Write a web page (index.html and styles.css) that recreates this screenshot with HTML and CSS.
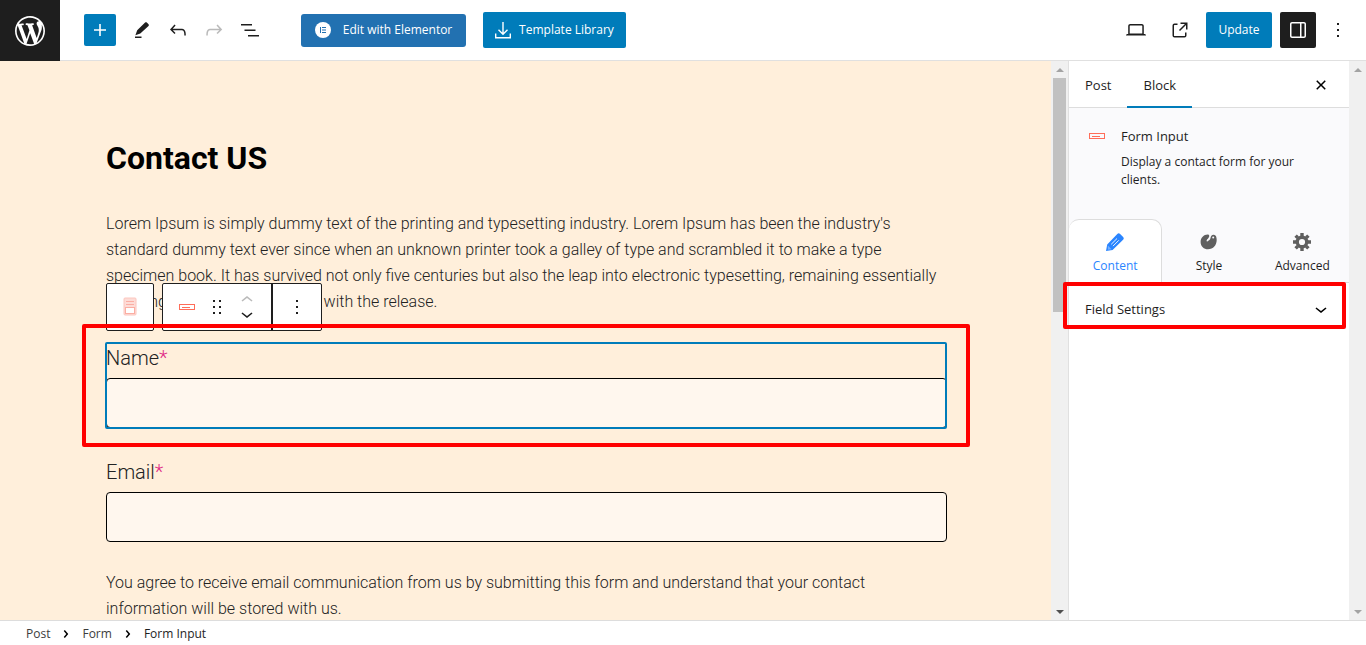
FILE: index.html
```html
<!DOCTYPE html>
<html lang="en">
<head>
    <meta charset="UTF-8">
    <title>Edit Post</title>
    <link rel="stylesheet" href="styles.css">
</head>
<body>
    <!-- Top bar -->
    <header class="topbar">
        <a href="#" class="wp-logo" aria-label="View Posts">
            <svg width="36" height="36" viewBox="-2 -2 24 24"><path d="M20 10c0-5.51-4.49-10-10-10C4.48 0 0 4.49 0 10c0 5.52 4.48 10 10 10 5.51 0 10-4.48 10-10zM7.78 15.37L4.37 6.22c.55-.02 1.17-.08 1.17-.08.5-.06.44-1.13-.06-1.11 0 0-1.45.11-2.37.11-.18 0-.37 0-.58-.01C4.12 2.69 6.87 1.11 10 1.11c2.33 0 4.45.87 6.05 2.34-.68-.11-1.65.39-1.65 1.58 0 .74.45 1.36.9 2.1.35.61.55 1.36.55 2.46 0 1.49-1.4 5-1.4 5l-3.03-8.37c.54-.02.82-.17.82-.17.5-.05.44-1.25-.06-1.22 0 0-1.44.12-2.38.12-.87 0-2.33-.12-2.33-.12-.5-.03-.56 1.2-.06 1.22l.92.08 1.26 3.41zM17.41 10c.24-.64.74-1.87.43-4.25.7 1.29 1.05 2.71 1.05 4.25 0 3.29-1.73 6.24-4.4 7.78.97-2.59 1.94-5.2 2.92-7.78zM6.1 18.09C3.12 16.65 1.11 13.53 1.11 10c0-1.3.23-2.48.72-3.59C3.25 10.3 4.67 14.2 6.1 18.09zm4.03-6.63l2.58 6.98c-.86.29-1.76.45-2.71.45-.79 0-1.57-.11-2.29-.33.81-2.38 1.62-4.74 2.42-7.1z"/></svg>
        </a>
        <div class="tools">
            <button class="inserter" aria-label="Add block">
                <svg width="24" height="24" viewBox="0 0 24 24"><path d="M18 11.2h-5.2V6h-1.6v5.2H6v1.6h5.2V18h1.6v-5.2H18z"/></svg>
            </button>
            <div class="tool-group">
                <button class="icon-btn" aria-label="Tools">
                    <svg width="24" height="24" viewBox="0 0 24 24"><path d="M18.500 6.200l-1.700-1.700c-.5-.5-1.200-.5-1.700 0L7.200 12.300 5.400 17.200l4.900-1.800 8.200-7.500c.5-.5.5-1.200 0-1.700zM11.500 18.500H5V20h6.500v-1.500z"/></svg>
                </button>
                <button class="icon-btn" aria-label="Undo">
                    <svg width="24" height="24" viewBox="0 0 24 24"><path d="M18.300 11.700c-.6-.6-1.400-.9-2.300-.9H6.700l2.900-3.300-1.100-1-4.500 5L8.500 16l1-1-2.700-2.700H16c.5 0 .9.2 1.300.5 1 1 1 3.400 1 4.500v.3h1.500v-.2c0-1.500 0-4.300-1.500-5.700z"/></svg>
                </button>
                <button class="icon-btn faded" aria-label="Redo">
                    <svg width="24" height="24" viewBox="0 0 24 24"><path d="M15.600 6.500l-1.100 1 2.900 3.300H8c-.9 0-1.700.3-2.300.9-1.400 1.500-1.400 4.200-1.400 5.600v.2h1.500v-.3c0-1.100 0-3.500 1-4.500.3-.3.7-.5 1.300-.5h9.200L14.500 15l1.100 1.100 4.600-4.600-4.600-5z"/></svg>
                </button>
                <button class="icon-btn" aria-label="Document overview">
                    <svg width="24" height="24" viewBox="0 0 24 24"><path d="M3 6h11v1.500H3V6zm3.500 5.500h11V13h-11v-1.500zM21 17H10v1.500h11V17z"/></svg>
                </button>
            </div>
        </div>
        <button class="btn elementor">
            <svg width="16" height="16" viewBox="0 0 16 16"><circle cx="8" cy="8" r="8" fill="#fff"/><path fill="#2271b1" d="M5 5h1v6H5zM7 5h4v1H7zM7 7.500h4v1H7zM7 10h4v1H7z"/></svg>
            Edit with Elementor
        </button>
        <button class="btn library">
            <svg width="16" height="18" viewBox="0 0 16 18" fill="none" stroke="#fff" stroke-width="1.400"><path d="M8 1v12M3.500 8.800L8 13.200l4.500-4.400M.7 12.500v4.300h14.600v-4.300"/></svg>
            Template Library
        </button>
        <div class="actions">
            <button class="icon-btn" aria-label="Preview">
                <svg width="24" height="24" viewBox="0 0 24 24"><path d="M20.500 16h-.7V8c0-1.100-.9-2-2-2H6.200c-1.100 0-2 .9-2 2v8h-.7c-.8 0-1.500.7-1.500 1.500h20c0-.8-.7-1.500-1.500-1.500zM5.700 8c0-.3.2-.5.5-.5h11.600c.3 0 .5.2.5.5v7.600H5.700V8z"/></svg>
            </button>
            <button class="icon-btn" aria-label="View Post">
                <svg width="24" height="24" viewBox="0 0 24 24"><path d="M19.500 4.500h-7V6h4.440l-5.970 5.970 1.060 1.060L18 7.060v4.440h1.500v-7zm-13 1a2 2 0 0 0-2 2v10a2 2 0 0 0 2 2h10a2 2 0 0 0 2-2v-3H17v3a.5.5 0 0 1-.5.5h-10a.5.5 0 0 1-.5-.5v-10a.5.5 0 0 1 .5-.5h3V5.500h-3z"/></svg>
            </button>
            <button class="btn update">Update</button>
            <button class="icon-btn pressed" aria-label="Settings">
                <svg width="24" height="24" viewBox="0 0 24 24"><path d="M18 4H6c-1.100 0-2 .9-2 2v12c0 1.100.9 2 2 2h12c1.100 0 2-.9 2-2V6c0-1.100-.9-2-2-2zm-4 14.500H6c-.3 0-.5-.2-.5-.5V6c0-.3.2-.5.5-.5h8v13zm4.500-.5c0 .3-.2.5-.5.5h-2.500v-13H18c.3 0 .5.2.5.5v12z"/></svg>
            </button>
            <button class="icon-btn narrow" aria-label="Options">
                <svg width="24" height="24" viewBox="0 0 24 24"><path d="M13 19h-2v-2h2v2zm0-6h-2v-2h2v2zm0-6h-2V5h2v2z"/></svg>
            </button>
        </div>
    </header>

    <div class="editor">
        <!-- Post content -->
        <main class="canvas">
            <h1>Contact US</h1>
            <p>Lorem Ipsum is simply dummy text of the printing and typesetting industry. Lorem Ipsum has been the industry's standard dummy text ever since when an unknown printer took a galley of type and scrambled it to make a type specimen book. It has survived not only five centuries but also the leap into electronic typesetting, remaining essentially unchanged. It was popularised with the release.</p>

            <div class="field selected">
                <label for="name">Name<span class="star">*</span></label>
                <input type="text" id="name">
                <div class="block-toolbar">
                    <button class="tb-box parent" aria-label="Select parent block">
                        <svg width="14" height="20" viewBox="0 0 14 20" fill="#fddcd7" stroke="#fbaea3"><rect x="1" y="1" width="12" height="17" rx="1" stroke="#fcc6be"/><path d="M3 4.500h8M3 7.500h8"/><rect x="2.500" y="10.500" width="9" height="6" fill="#fff"/></svg>
                    </button>
                    <div class="tb-box main-tools">
                        <button class="tb-btn" aria-label="Form Input">
                            <svg width="16" height="6" viewBox="0 0 16 6" fill="none" stroke="#ff6d59"><rect x=".5" y=".5" width="15" height="5"/><path d="M3 3.500h8"/></svg>
                        </button>
                        <button class="tb-btn drag" aria-label="Drag">
                            <svg width="24" height="24" viewBox="0 0 24 24"><path d="M8 7h2V5H8zM8 13h2v-2H8zM8 19h2v-2H8zM14 7h2V5h-2zM14 13h2v-2h-2zM14 19h2v-2h-2z"/></svg>
                        </button>
                        <div class="movers">
                            <button class="faded" aria-label="Move up"><svg width="24" height="16" viewBox="0 3 24 16"><path d="M6.500 12.400L12 8l5.500 4.400-.9 1.200L12 10l-4.500 3.600-1-1.200z"/></svg></button>
                            <button aria-label="Move down"><svg width="24" height="16" viewBox="0 5 24 16"><path d="M17.500 11.600L12 16l-5.500-4.400.9-1.200L12 14l4.500-3.600 1 1.200z"/></svg></button>
                        </div>
                        <button class="tb-btn more" aria-label="Options">
                            <svg width="24" height="24" viewBox="0 0 24 24"><path d="M13 19h-2v-2h2v2zm0-6h-2v-2h2v2zm0-6h-2V5h2v2z"/></svg>
                        </button>
                    </div>
                </div>
                <div class="mark mark-field"></div>
            </div>

            <div class="field">
                <label for="email">Email<span class="star">*</span></label>
                <input type="email" id="email">
            </div>

            <p>You agree to receive email communication from us by submitting this form and understand that your contact information will be stored with us.</p>
        </main>
        <div class="scroll">
            <span class="arrow up"></span>
            <span class="thumb"></span>
            <span class="arrow down dark"></span>
        </div>

        <!-- Block settings -->
        <aside class="sidebar">
            <div class="side-tabs">
                <button>Post</button>
                <button class="active">Block</button>
                <button class="close" aria-label="Close settings">
                    <svg width="24" height="24" viewBox="0 0 24 24"><path d="M12 13.060l3.712 3.713 1.061-1.060L13.061 12l3.712-3.712-1.060-1.060L12 10.938 8.288 7.227l-1.061 1.060L10.939 12l-3.712 3.712 1.060 1.061L12 13.061z"/></svg>
                </button>
            </div>
            <div class="block-card">
                <svg width="16" height="6" viewBox="0 0 16 6" fill="none" stroke="#ff6d59"><rect x=".5" y=".5" width="15" height="5"/><path d="M3 3.500h8"/></svg>
                <div>
                    <h2>Form Input</h2>
                    <p>Display a contact form for your clients.</p>
                </div>
            </div>
            <div class="panel-tabs">
                <button class="active">
                    <svg width="20" height="20" viewBox="0 0 20 20"><path d="M1 19l1.200-6.500L12.300 2c.9-.9 1.900-.9 2.800 0l3 3c.9.9.9 1.900 0 2.800L7.600 18z"/><path d="M6.200 12.300l5.800-5.800M8 14.100l5.800-5.800" stroke="#fff" stroke-width=".9"/><path d="M2.800 13.600l3.700 3.600-3.600.6z" fill="#fff" opacity=".35"/></svg>
                    Content
                </button>
                <button>
                    <svg width="20" height="20" viewBox="0 0 20 20"><path d="M9 2.500C5 2.300 1.600 5.600 1.600 10c0 4.500 3.300 7.300 7.400 7.300 5.300 0 8.700-4.200 8.700-9.300 0-3.100-.8-5.200-2.900-5.300-2.200-.1-3 1.500-3.300 3.300-.3 1.900-1.700 2.100-2.500 3.100-.6.7-1.700.2-1.300-.9.500-1.400 1.900-1.700 2.400-3.500.3-1.100.1-2.100-1.100-2.200z"/><circle cx="14.200" cy="5.600" r="1" fill="#fafafc"/></svg>
                    Style
                </button>
                <button>
                    <svg width="20" height="20" viewBox="0 0 20 20"><g fill="none" stroke="#5f5f5f"><circle cx="10" cy="10" r="4.800" stroke-width="3.400"/><path stroke-width="3.400" d="M10 1v3M10 16v3M1 10h3M16 10h3M3.600 3.600l2.200 2.200M14.200 14.200l2.200 2.200M3.600 16.400l2.200-2.200M14.200 5.800l2.200-2.200"/></g></svg>
                    Advanced
                </button>
            </div>
            <button class="panel-title">
                Field Settings
                <svg width="24" height="24" viewBox="0 0 24 24"><path d="M17.500 11.600L12 16l-5.500-4.400.9-1.200L12 14l4.500-3.600 1 1.200z"/></svg>
                <span class="mark mark-panel"></span>
            </button>
        </aside>
        <div class="scroll">
            <span class="arrow up"></span>
            <span class="arrow down"></span>
        </div>
    </div>

    <!-- Breadcrumb -->
    <footer class="breadcrumb">
        <a href="#">Post</a>
        <svg width="24" height="24" viewBox="0 0 24 24"><path d="M10.860 8.040L14.280 12.030 10.860 16.020 9.720 15.040 12.300 12.030 9.720 9.020z"/></svg>
        <a href="#">Form</a>
        <svg width="24" height="24" viewBox="0 0 24 24"><path d="M10.860 8.040L14.280 12.030 10.860 16.020 9.720 15.040 12.300 12.030 9.720 9.020z"/></svg>
        <a href="#" class="current">Form Input</a>
    </footer>
</body>
</html>
```
FILE: styles.css
```css
* {
    box-sizing: border-box;
}

body {
    margin: 0;
    height: 100vh;
    display: flex;
    flex-direction: column;
    overflow: hidden;
    background-color: #fff;
    color: #1e1e1e;
    font-family: "Segoe UI", "Open Sans", "Noto Sans", sans-serif;
    font-size: 12px;
    line-height: 18px;
}

button {
    display: flex;
    align-items: center;
    justify-content: center;
    margin: 0;
    padding: 0;
    border: none;
    background: none;
    color: inherit;
    font: inherit;
    white-space: nowrap;
}

svg {
    flex-shrink: 0;
}

a {
    color: inherit;
    text-decoration: none;
}

/* Top bar */
.topbar {
    display: flex;
    align-items: center;
    flex-shrink: 0;
    height: 61px;
    padding-right: 14px;
    border-bottom: 1px solid #e0e0e0;
}

.wp-logo {
    display: flex;
    align-items: center;
    justify-content: center;
    width: 60px;
    height: 61px;
    margin-bottom: -1px;
    background-color: #1e1e1e;
    fill: #fff;
}

.tools {
    display: flex;
    align-items: center;
    gap: 8px;
    margin-left: 24px;
    margin-right: 33px;
}

.tool-group {
    display: flex;
}

.inserter {
    width: 32px;
    height: 32px;
    border-radius: 2px;
    background-color: #007cba;
    fill: #fff;
}

.icon-btn {
    width: 36px;
    height: 36px;
    border-radius: 2px;
    fill: #1e1e1e;
}

.faded {
    opacity: 0.3;
}

.narrow {
    width: 28px;
}

.pressed {
    background-color: #1e1e1e;
    fill: #fff;
}

.btn {
    height: 36px;
    border-radius: 2px;
    background-color: #007cba;
    color: #fff;
    font-weight: 500;
    line-height: 20px;
}

.elementor {
    width: 165px;
    height: 33px;
    gap: 12px;
    margin-right: 17px;
    border-radius: 3px;
    background-color: #2271b1;
}

.library {
    width: 143px;
    gap: 8px;
}

.update {
    width: 66px;
}

.actions {
    display: flex;
    gap: 8px;
    margin-left: auto;
}

/* Middle part */
.editor {
    display: flex;
    flex: 1;
    min-height: 0;
}

.canvas {
    flex: 1;
    min-width: 0;
    overflow: hidden;
    padding: 77px 104px 0 106px;
    background-color: #ffefdb;
    color: #222;
    font-family: Roboto, sans-serif;
    font-size: 16px;
    font-weight: 300;
    line-height: 26px;
}

.canvas h1 {
    margin: 0 0 33px;
    color: #000;
    font-size: 32px;
    font-weight: 700;
    line-height: 40px;
}

.canvas p {
    margin: 0 0 27px;
}

.field {
    position: relative;
    margin-bottom: 28px;
}

.field label {
    display: block;
    margin-bottom: 3px;
    font-size: 20px;
    line-height: 33px;
}

.star {
    color: #e02a86;
}

.field input {
    display: block;
    width: 100%;
    height: 50px;
    padding: 0 16px;
    border: 1px solid #000;
    border-radius: 4px;
    background-color: #fff7ee;
    font: inherit;
}

.selected::after {
    content: "";
    position: absolute;
    inset: 0 0 -1px -1px;
    border: 2px solid #007cba;
    border-radius: 2px;
    pointer-events: none;
}

/* Toolbar above the selected block */
.block-toolbar {
    position: absolute;
    left: 0;
    bottom: 100%;
    display: flex;
    gap: 8px;
    margin-bottom: 11px;
    fill: #1e1e1e;
}

.tb-box {
    height: 48px;
    border: 1px solid #1e1e1e;
    border-radius: 2px;
    background-color: #fff;
}

.parent {
    width: 48px;
}

.main-tools {
    display: flex;
    width: 160px;
}

.tb-btn {
    width: 48px;
}

.drag {
    width: 12px;
}

.movers {
    display: flex;
    flex-direction: column;
    justify-content: center;
    width: 48px;
}

.movers button {
    height: 16px;
}

.more {
    width: 50px;
    border-left: 2px solid #1e1e1e;
}

/* Red frames */
.mark {
    position: absolute;
    z-index: 2;
    border: 4px solid #f00;
    border-radius: 2px;
    pointer-events: none;
}

.mark-field {
    inset: -18px -23px -19px -24px;
}

.mark-panel {
    inset: -1px 3px 5px -6px;
}

/* Scroll columns */
.scroll {
    display: flex;
    flex-direction: column;
    align-items: center;
    width: 17px;
    background-color: #f0f0f0;
}

.arrow {
    margin: 7px 0 6px;
    border: 4px solid transparent;
}

.up {
    border-top: none;
    border-bottom-color: #a3a3a3;
}

.down {
    margin-top: auto;
    border-bottom: none;
    border-top-color: #a3a3a3;
}

.dark {
    border-top-color: #505050;
}

.thumb {
    width: 13px;
    height: 234px;
    background-color: #c1c1c1;
}

/* Sidebar */
.sidebar {
    width: 281px;
    border-left: 1px solid #e0e0e0;
}

.side-tabs {
    display: flex;
    height: 47px;
    border-bottom: 1px solid #ddd;
}

.side-tabs button {
    height: 47px;
    padding: 0 16px;
    font-size: 13px;
    font-weight: 500;
}

.side-tabs .active {
    box-shadow: inset 0 -2px #007cba;
}

.side-tabs .close {
    margin-left: auto;
}

.block-card {
    display: flex;
    align-items: flex-start;
    gap: 16px;
    height: 111px;
    padding: 19px 32px 0 20px;
    background-color: #fafafc;
}

.block-card svg {
    margin-top: 6px;
}

.block-card h2 {
    margin: 0 0 8px;
    font-size: 13px;
    font-weight: 500;
    line-height: 18px;
}

.block-card p {
    margin: 0;
}

.panel-tabs {
    display: grid;
    grid-template-columns: repeat(3, 1fr);
    height: 64px;
    background-color: #fafafc;
}

.panel-tabs button {
    flex-direction: column;
    gap: 5px;
    padding-top: 5px;
    border-bottom: 1px solid #ddd;
    fill: #5f5f5f;
}

.panel-tabs .active {
    border: 1px solid #ddd;
    border-left: none;
    border-bottom-color: #fff;
    border-radius: 10px 10px 0 0;
    background-color: #fff;
    color: #2a85ff;
    fill: #2a85ff;
}

.panel-title {
    position: relative;
    justify-content: space-between;
    width: 100%;
    height: 51px;
    padding: 0 16px;
    font-size: 13px;
    font-weight: 500;
}

/* Breadcrumb */
.breadcrumb {
    display: flex;
    align-items: center;
    flex-shrink: 0;
    height: 25px;
    padding: 1px 26px 0;
    gap: 4px;
    border-top: 1px solid #ddd;
    color: #3c3c3c;
}

.current {
    color: #1e1e1e;
}
```
